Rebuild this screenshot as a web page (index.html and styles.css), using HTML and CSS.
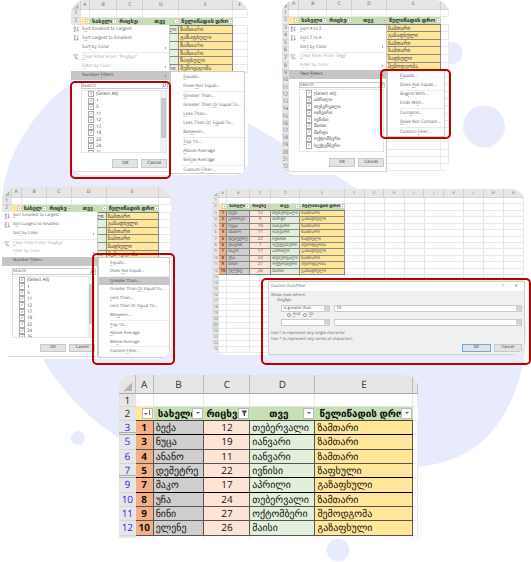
FILE: index.html
```html
<!DOCTYPE html>
<html lang="ka">
<head>
<meta charset="utf-8">
<title>Excel filters</title>
<link rel="stylesheet" href="styles.css">
</head>
<body>
<svg class="backdrop" viewBox="0 0 531 562" aria-hidden="true">
  <path d="M3.3 188C9 150 36 108 71.7 82.7C120 50 205 85 248 123C280 142 322 166 357 189C430 215 528 260 526 335Q526 348 524 359C518 390 507 415 489 435C470 455 445 464 418 467C370 478 180 470 118 437C90 420 62 392 43 359C5 300 -2 240 3.3 188Z"/>
  <circle cx="451.8" cy="53" r="11"/><circle cx="484" cy="126.5" r="21"/>
  <circle cx="78" cy="438" r="7"/><circle cx="338" cy="550" r="11.3"/>
</svg>
<svg class="defs" aria-hidden="true">
  <symbol id="az" viewBox="0 0 8 8"><path d="M1.2 3.4 2.4.6l1.2 2.8M1.5 2.5h1.8" stroke="#6a86b8"/><path d="M1.3 4.6h2.2L1.3 7.3h2.2" stroke="#9a6bb0"/><path d="M6.2.8v6M5 5.6l1.2 1.3 1.2-1.3" stroke="#777"/></symbol>
  <symbol id="za" viewBox="0 0 8 8"><path d="M1.2.7h2.3L1.2 3.4h2.3" stroke="#9a6bb0"/><path d="M1.2 7.3 2.4 4.6l1.2 2.7M1.5 6.5h1.8" stroke="#6a86b8"/><path d="M6.2.8v6M5 5.6l1.2 1.3 1.2-1.3" stroke="#777"/></symbol>
  <symbol id="clr" viewBox="0 0 8 8"><path d="M.6 1h5.6L4 3.6v3L2.9 5.8V3.6zM5 4.8l2.2 2.4M7.2 4.8 5 7.2" stroke="#999"/></symbol>
  <symbol id="mag" viewBox="0 0 8 8"><circle cx="4.8" cy="3" r="2.3" stroke="#4f7fb5"/><path d="M3.2 4.8.8 7.2" stroke="#4f7fb5"/></symbol>
</svg>

<main class="page">
<div class="row top">
  <section class="shot one">
    <div class="clip">
    <table class="sheet">
      <tr class="cols"><th class="corner"><th>A<th>B<th>C<th>D<th>E<th>F
      <tr><th>1<td><td><td><td><td><td>
      <tr class="head"><th>2<td><b></b><td><s>სახელი</s><b></b><td><s>რიცხვი</s><b class="on"></b><td class="mid"><s>თვე</s><b></b><td><s>წელიწადის დრო</s><b></b><td>
      <tr class="data"><th>3<td><td><td><td>თებერვალი<td>ზამთარი<td>
      <tr class="data"><th>4<td><td><td><td>მარტი<td>გაზაფხული<td>
      <tr class="data"><th>5<td><td><td><td>იანვარი<td>ზამთარი<td>
      <tr class="data"><th>6<td><td><td><td>იანვარი<td>ზამთარი<td>
      <tr class="data"><th>7<td><td><td><td>ივნისი<td>ზაფხული<td>
      <tr class="data"><th>8<td><td><td><td>სექტემბერი<td>შემოდგომა<td>
    </table>
    <div class="menu">
      <div class="item"><svg><use href="#az"/></svg>S<u>o</u>rt Smallest to Largest</div>
      <div class="item"><svg><use href="#za"/></svg>S<u>o</u>rt Largest to Smallest</div>
      <div class="item more">Sor<u>t</u> by Color</div><hr>
      <div class="item off"><svg><use href="#clr"/></svg><u>C</u>lear Filter From "რიცხვი"</div>
      <div class="item off more">F<u>i</u>lter by Color</div>
      <div class="item hot more">Number <u>F</u>ilters</div>
      <div class="search">Search<svg><use href="#mag"/></svg></div>
      <div class="list"><ul><li>(Select All)<li>1<li>5<li>11<li>12<li>17<li>19<li>22<li>24<li>26</ul><div class="bar"><i></i></div></div>
      <div class="buttons"><span>OK</span><span>Cancel</span></div>
    </div>
    <div class="sub">
      <div><u>E</u>quals...</div><div>Does <u>N</u>ot Equal...</div><hr>
      <div><u>G</u>reater Than...</div><div>Greater Than <u>O</u>r Equal To...</div><div><u>L</u>ess Than...</div><div>Less Than Or E<u>q</u>ual To...</div><div>Bet<u>w</u>een...</div><hr>
      <div><u>T</u>op 10...</div><div><u>A</u>bove Average</div><div>Bel<u>o</u>w Average</div><hr>
      <div>Custom <u>F</u>ilter...</div>
    </div>
    </div>
    <div class="mark"></div>
  </section>

  <section class="shot two">
    <div class="clip">
    <table class="sheet">
      <tr class="cols"><th class="corner"><th>A<th>B<th>C<th>D<th>E<th>
      <tr><th>1<td><td><td><td><td><td>
      <tr class="head"><th>2<td><b></b><td><s>სახელი</s><b></b><td><s>რიცხვი</s><b></b><td class="mid"><s>თვე</s><b class="on"></b><td><s>წელიწადის დრო</s><b></b><td>
      <tr class="data"><th>3<td><td><td><td><td>ზამთარი<td>
      <tr class="data"><th>4<td><td><td><td><td>გაზაფხული<td>
      <tr class="data"><th>5<td><td><td><td><td>ზამთარი<td>
      <tr class="data"><th>6<td><td><td><td><td>ზამთარი<td>
      <tr class="data"><th>7<td><td><td><td><td>ზაფხული<td>
      <tr class="data"><th>8<td><td><td><td><td>შემოდგომა<td>
      <tr><th class="cur">9<td><td><td><td><td><td>
      <tr><th>10<td><td><td><td><td><td>
      <tr><th>11<td><td><td><td><td><td>
      <tr><th>12<td><td><td><td><td><td>
      <tr><th>13<td><td><td><td><td><td>
      <tr><th>14<td><td><td><td><td><td>
      <tr><th>15<td><td><td><td><td><td>
      <tr><th>16<td><td><td><td><td><td>
      <tr><th>17<td><td><td><td><td><td>
      <tr><th>18<td><td><td><td><td><td>
      <tr><th>19<td><td><td><td><td><td>
      <tr><th>20<td><td><td><td><td><td>
      <tr><th>21<td><td><td><td><td><td>
      <tr><th>22<td><td><td><td><td><td>
    </table>
    <div class="menu">
      <div class="item"><svg><use href="#az"/></svg><u>S</u>ort A to Z</div>
      <div class="item"><svg><use href="#za"/></svg>S<u>o</u>rt Z to A</div>
      <div class="item more">Sor<u>t</u> by Color</div><hr>
      <div class="item off"><svg><use href="#clr"/></svg><u>C</u>lear Filter From "თვე"</div>
      <div class="item off more">F<u>i</u>lter by Color</div>
      <div class="item hot more">Text <u>F</u>ilters</div>
      <div class="search">Search<svg><use href="#mag"/></svg></div>
      <div class="list"><ul><li>(Select All)<li>აპრილი<li>თებერვალი<li>იანვარი<li>ივნისი<li>მაისი<li>მარტი<li>ოქტომბერი<li>სექტემბერი</ul></div>
      <div class="buttons"><span>OK</span><span>Cancel</span></div>
    </div>
    <div class="sub">
      <div><u>E</u>quals...</div><div>Does <u>N</u>ot Equal...</div><hr>
      <div>Beg<u>i</u>ns With...</div><div>Ends Wi<u>t</u>h...</div><hr>
      <div>Cont<u>a</u>ins...</div><div><u>D</u>oes Not Contain...</div><hr>
      <div>Custom <u>F</u>ilter...</div>
    </div>
    </div>
    <div class="mark"></div>
  </section>
</div>

<div class="row middle">
  <section class="shot three">
    <div class="clip">
    <table class="sheet">
      <tr class="cols"><th class="corner"><th>A<th>B<th>C<th>D<th>E<th>
      <tr><th>1<td><td><td><td><td><td>
      <tr class="head"><th>2<td><b></b><td><s>სახელი</s><b></b><td><s>რიცხვი</s><b class="on"></b><td class="mid"><s>თვე</s><b></b><td><s>წელიწადის დრო</s><b></b><td>
      <tr class="data"><th>3<td><td><td><td>თებერვალი<td>ზამთარი<td>
      <tr class="data"><th>4<td><td><td><td>მარტი<td>გაზაფხული<td>
      <tr class="data"><th>5<td><td><td><td>იანვარი<td>ზამთარი<td>
      <tr class="data"><th>6<td><td><td><td>იანვარი<td>ზამთარი<td>
      <tr class="data"><th>7<td><td><td><td>ივნისი<td>ზაფხული<td>
      <tr class="data"><th>8<td><td><td><td>სექტემბერი<td>შემოდგომა<td>
    </table>
    <div class="menu">
      <div class="item"><svg><use href="#az"/></svg><u>S</u>ort Smallest to Largest</div>
      <div class="item"><svg><use href="#za"/></svg>S<u>o</u>rt Largest to Smallest</div>
      <div class="item more">Sor<u>t</u> by Color</div><hr>
      <div class="item off"><svg><use href="#clr"/></svg><u>C</u>lear Filter From "რიცხვი"</div>
      <div class="item off more">F<u>i</u>lter by Color</div>
      <div class="item hot more">Number <u>F</u>ilters</div>
      <div class="search">Search<svg><use href="#mag"/></svg></div>
      <div class="list"><ul><li>(Select All)<li>1<li>5<li>11<li>12<li>17<li>19<li>22<li>24<li>26</ul><div class="bar"><i></i></div></div>
      <div class="buttons"><span>OK</span><span>Cancel</span></div>
    </div>
    <div class="sub">
      <div><u>E</u>quals...</div><div>Does <u>N</u>ot Equal...</div><hr>
      <div class="hot"><u>G</u>reater Than...</div><div>Greater Than <u>O</u>r Equal To...</div><div><u>L</u>ess Than...</div><div>Less Than Or E<u>q</u>ual To...</div><div>Bet<u>w</u>een...</div><hr>
      <div><u>T</u>op 10...</div><div><u>A</u>bove Average</div><div>Bel<u>o</u>w Average</div><hr>
      <div>Custom <u>F</u>ilter...</div>
    </div>
    </div>
    <div class="mark"></div>
  </section>

  <section class="shot four">
    <div class="clip">
    <table class="sheet">
      <tr class="cols"><th class="corner"><th>A<th>B<th>C<th>D<th>E<th>F<th>G<th>H<th>I<th>J<th>K<th>L<th>M<th>N
      <tr><th>1<td><td><td><td><td><td class="rest">
      <tr class="head"><th>2<td><b></b><td><s>სახელი</s><b></b><td><s>რიცხვი</s><b class="on"></b><td class="mid"><s>თვე</s><b></b><td><s>წელიწადის დრო</s><b></b><td class="rest">
      <tr class="data"><th>3<td>1<td>ბექა<td>12<td>თებერვალი<td>ზამთარი<td class="rest">
      <tr class="data"><th>4<td>2<td>გიორგი<td>5<td>მარტი<td>გაზაფხული<td class="rest">
      <tr class="data"><th>5<td>3<td>ნუცა<td>19<td>იანვარი<td>ზამთარი<td class="rest">
      <tr class="data"><th>6<td>4<td>ანანო<td>11<td>იანვარი<td>ზამთარი<td class="rest">
      <tr class="data"><th>7<td>5<td>დემეტრე<td>22<td>ივნისი<td>ზაფხული<td class="rest">
      <tr class="data"><th>8<td>6<td>დავით<td>1<td>სექტემბერი<td>შემოდგომა<td class="rest">
      <tr class="data"><th>9<td>7<td>მაკო<td>17<td>აპრილი<td>გაზაფხული<td class="rest">
      <tr class="data"><th>10<td>8<td>უჩა<td>24<td>თებერვალი<td>ზამთარი<td class="rest">
      <tr class="data"><th>11<td>9<td>ნინი<td>27<td>ოქტომბერი<td>შემოდგომა<td class="rest">
      <tr class="data"><th>12<td>10<td>ელენე<td>26<td>მაისი<td>გაზაფხული<td class="rest">
      <tr><th>13<td><td><td><td><td><td class="rest">
      <tr><th>14<td><td><td><td><td><td class="rest">
      <tr><th>15<td><td><td><td><td><td class="rest">
      <tr><th>16<td><td><td><td><td><td class="rest">
      <tr><th>17<td><td><td><td><td><td class="rest">
      <tr><th>18<td><td><td><td><td><td class="rest">
      <tr><th>19<td><td><td><td><td><td class="rest">
      <tr><th>20<td><td><td><td><td><td class="rest">
      <tr><th class="cur">21<td><td><td><td><td><td class="rest">
      <tr><th>22<td><td><td><td><td><td class="rest">
      <tr><th>23<td><td><td><td><td><td class="rest">
      <tr><th>24<td><td><td><td><td><td class="rest">
      <tr><th>25<td><td><td><td><td><td class="rest">
    </table>
    <div class="dialog">
      <header><span>Custom AutoFilter</span><span>?</span><span>✕</span></header>
      <div class="body">
        <p>Show rows where:</p>
        <p class="field">რიცხვი</p>
        <div class="pair"><span class="combo">is greater than</span><span class="combo">10</span></div>
        <div class="radios"><i class="sel"></i><span><u>A</u>nd</span><i></i><span><u>O</u>r</span></div>
        <div class="pair"><span class="combo"></span><span class="combo"></span></div>
        <div class="hint"><p>Use ? to represent any single character</p><p>Use * to represent any series of characters</p></div>
        <div class="buttons"><span class="ok">OK</span><span>Cancel</span></div>
      </div>
    </div>
    </div>
    <div class="mark"></div>
  </section>
</div>

<div class="row bottom">
  <section class="shot five">
    <div class="clip">
    <table class="sheet">
      <tr class="cols"><th class="corner"><th>A<th>B<th>C<th>D<th>E<th>
      <tr class="first"><th>1<td><td><td><td><td><td>
      <tr class="head"><th>2<td><b class="sort"></b><td><s>სახელი</s><b></b><td><s>რიცხვი</s><b class="funnel"></b><td class="mid"><s>თვე</s><b></b><td><s>წელიწადის დრო</s><b></b><td>
      <tr class="data gap"><th>3<td>1<td>ბექა<td>12<td>თებერვალი<td>ზამთარი<td>
      <tr class="data"><th>5<td>3<td>ნუცა<td>19<td>იანვარი<td>ზამთარი<td>
      <tr class="data"><th>6<td>4<td>ანანო<td>11<td>იანვარი<td>ზამთარი<td>
      <tr class="data gap"><th>7<td>5<td>დემეტრე<td>22<td>ივნისი<td>ზაფხული<td>
      <tr class="data heavy"><th>9<td>7<td>მაკო<td>17<td>აპრილი<td>გაზაფხული<td>
      <tr class="data"><th>10<td>8<td>უჩა<td>24<td>თებერვალი<td>ზამთარი<td>
      <tr class="data"><th>11<td>9<td>ნინი<td>27<td>ოქტომბერი<td>შემოდგომა<td>
      <tr class="data"><th>12<td>10<td>ელენე<td>26<td>მაისი<td>გაზაფხული<td>
      <tr><th><td><td><td><td><td><td>
    </table>
    </div>
  </section>
</div>
</main>
</body>
</html>
```
FILE: styles.css
```css
* { box-sizing: border-box; }
body {
  margin: 0;
  width: 531px;
  height: 562px;
  overflow: hidden;
  background: #fff;
  font-family: "Open Sans", "DejaVu Sans", sans-serif;
  color: #222;
  text-rendering: geometricPrecision;
}
.backdrop { position: absolute; inset: 0; width: 531px; height: 562px; fill: #e8ebfb; z-index: -1; }
.defs { position: absolute; width: 0; height: 0; }
symbol { overflow: visible; fill: none; }

/* Canvas rows */
.row { display: flex; align-items: flex-start; }
.top { height: 187px; padding-left: 71px; gap: 34px; }
.middle { height: 187px; padding-left: 2px; gap: 41px; }
.bottom { padding-left: 119px; }
.shot { position: relative; flex: none; }
.clip { position: relative; width: 100%; height: 100%; overflow: hidden; border-radius: 14px; background: #fff; }
.five .clip { border-radius: 12px 12px 0 0; }
.mark { position: absolute; border: 2px solid #c00000; border-radius: 5px; }

.one { width: 177px; height: 174.5px; --cols: 9.7px 9.3px 27.3px 26px 36px 53.4px 15.3px; --ch: 10.3px; --rh: 7.85px; --item: 9.05px; --li: 6.5px; --fs: 4.5px; --gs: 5.6px; }
.two { width: 167px; height: 174.5px; --cols: 6.7px 10.6px 28px 25px 34.7px 53.7px 8.3px; --ch: 9.5px; --rh: 7.6px; --item: 9px; --li: 6.5px; --fs: 4.45px; --gs: 5.4px; }
.three { width: 169px; height: 172px; --cols: 9.5px 10.2px 25.8px 24.2px 35px 52px 12.3px; --ch: 10.5px; --rh: 7.6px; --item: 8.85px; --li: 6.35px; --fs: 4.2px; --gs: 5.4px; }
.four { width: 313px; height: 166px; margin-top: 2px; --cols: 7.3px 8px 23px 21px 29px 44.4px repeat(9, 19.9px); --ch: 9.2px; --rh: 6.47px; --gs: 4.45px; }
.five { width: 299px; height: 163.5px; margin-top: .5px; --cols: 16.7px 18px 50.8px 45.8px 65.2px 98px 4.5px; --ch: 19.3px; --rh: 14.33px; --gs: 9.9px; }

/* Worksheet */
.sheet, .sheet tbody { display: block; }
.sheet tr { display: grid; grid-template-columns: var(--cols); height: var(--rh); line-height: calc(var(--rh) - .5px); font-size: var(--gs); }
.sheet th, .sheet td { display: block; min-width: 0; padding: 0; overflow: hidden; white-space: nowrap; text-align: left; }
.sheet td { border-right: 1px solid #e9e9e9; border-bottom: 1px solid #e9e9e9; }
.sheet th { background: #e6e6e6; color: #555; font-weight: 400; text-align: center; border-bottom: 1px solid #d6d6d6; }
.one th, .two th, .three th { font-size: 5px; }
.sheet .cols { height: var(--ch); line-height: var(--ch); }
.sheet .cols th { border-right: 1px solid #d0d0d0; }
.sheet .corner { background: linear-gradient(135deg, transparent 50%, #b5b5b5 50%) 70% 80% / 50% 50% no-repeat, #e6e6e6; }
.sheet .cur { background: #d5e2da; color: #217346; }
.sheet .head td { display: flex; align-items: center; background: #c6e0b4; border-right: 0; border-bottom: 1px solid #777; font-weight: 700; padding-left: 2px; color: #333; }
.sheet .head td:nth-child(2) { background: #ffe699; padding: 0; }
.sheet .head td:last-child { background: #fff; border-bottom-color: #e9e9e9; }
.sheet s { flex: 1; min-width: 0; overflow: hidden; text-decoration: none; }
.sheet .mid s { text-align: center; }
.sheet b { flex: none; width: 5px; height: 5px; margin-left: auto; background: linear-gradient(#888, #888) center / 40% 1px no-repeat, #fff; border: .5px solid #ccc; }
.sheet b.on { background-color: #ddd; }
.sheet .data td { border-color: #888; padding-left: 1px; }
.sheet .data td:nth-child(2) { background: #f4b084; text-align: center; font-weight: 700; padding: 0; }
.sheet .data td:nth-child(3) { background: #d0cece; }
.sheet .data td:nth-child(4) { background: #fce4d6; text-align: center; padding: 0; }
.sheet .data td:nth-child(5) { background: #e2efda; }
.sheet .data td:nth-child(6) { background: #ffe699; }
.sheet .data td:last-child { border-color: #e9e9e9; }
.sheet .rest { grid-column: 7 / 16; background: repeating-linear-gradient(90deg, transparent 0 18.9px, #e6e6e6 18.9px 19.9px) !important; }
.one .data td, .two .data td, .three .data td { color: #444; }

.one .data td:nth-child(5), .three .data td:nth-child(5) { direction: rtl; padding-right: 1px; }
.two tr:nth-child(n+10) { height: 7.22px; }
.four .data td { color: #555; }
.four th { font-size: 3.9px; color: #777; }
.four tr:nth-child(2) { height: 6px; }
.four tr:nth-child(n+14) { height: 5.95px; line-height: 5.5px; }

/* Filter menu */
.menu { position: absolute; background: #fff; font-size: var(--fs); color: #666; border-right: 1px solid #ccc; border-bottom: 1px solid #ddd; }
.one .menu { left: 0; top: 25px; width: 99.3px; height: 147px; --pad: 11px; }
.two .menu { left: 6.5px; top: 24.5px; width: 98.5px; height: 147px; --pad: 11.5px; }
.three .menu { left: 0; top: 25.2px; width: 96px; height: 145.3px; --pad: 11px; }
.menu hr, .sub hr { height: .9px; margin: 0 0 0 var(--pad); border: 0; background: #ececec; }
u { text-decoration-thickness: .4px; text-underline-offset: .5px; text-decoration-color: rgba(100, 100, 100, .35); }
.item { position: relative; height: var(--item); line-height: var(--item); padding-left: var(--pad); white-space: nowrap; }
.item svg { position: absolute; left: 1.5px; top: 1.3px; width: 6px; height: 6px; stroke-width: .8; }
.off { color: #aaa; }
.hot { background: #c6c6c6; color: #444; }
.more::after { content: ""; position: absolute; right: 3px; top: calc(50% - 1px); border: 1px solid transparent; border-left: 1.3px solid #555; border-right: 0; }
.search { display: flex; align-items: center; justify-content: space-between; height: 6.6px; margin: 2.2px 1.5px 0 calc(var(--pad) - 1px); border: 1px solid #ccc; line-height: 4px; }
.search svg { width: 6px; height: 5.5px; stroke-width: 1; }
.list { display: flex; justify-content: space-between; height: 63.5px; margin: .7px 2px 0 calc(var(--pad) - 1px); overflow: hidden; border: 1px solid #e6e6e6; color: #444; }
.three .list { height: 62px; }
.list ul { margin: 0; padding: .4px 0 0 6px; list-style: none; }
.list li { display: flex; align-items: center; gap: 1.5px; height: var(--li); white-space: nowrap; font-size: 4.7px; }
.list li::before { content: "✓"; width: 4.4px; height: 4.4px; border: .5px solid #aaa; font: 700 4px/3.2px "DejaVu Sans", sans-serif; text-align: center; }
.bar { width: 6px; background: #f0f0f0; }
.bar i { display: block; width: 5px; height: 40px; margin: 7px auto 0; background: #c8c8c8; }
.menu .buttons { display: flex; justify-content: flex-end; gap: 3px; margin: 6px 2px 0 0; }
.buttons span { width: 26px; height: 8.6px; border: 1px solid #c8c8c8; background: #e3e3e3; color: #333; text-align: center; line-height: 6.6px; }

.sub { position: absolute; padding-top: .6px; background: #fff; border: .5px solid #ccc; font-size: calc(var(--fs) + .1px); color: #666; --pad: 12px; }
.sub div { height: var(--sub); line-height: var(--sub); padding-left: var(--pad); white-space: nowrap; }
.one .sub { left: 99.3px; top: 71.3px; width: 75px; height: 103px; --sub: 9px; }
.two .sub { left: 105px; top: 70.2px; width: 58px; height: 66.5px; --sub: 8.9px; }
.three .sub { left: 96px; top: 70px; width: 72px; height: 101px; --sub: 8.6px; --pad: 11px; }

.one .mark { left: -1px; top: 81px; width: 101px; height: 98px; }
.two .mark { left: 97.5px; top: 69px; width: 71px; height: 70px; }
.three .mark { left: 90px; top: 66px; width: 83px; height: 112px; }
.four .mark { left: 49px; top: 89.3px; width: 269.5px; height: 87px; }

/* Custom AutoFilter dialog */
.dialog { position: absolute; left: 56px; top: 92px; width: 257px; height: 74px; border: 1px solid #c4d8c4; background: #f0f0f0; font-size: 4.1px; color: #666; line-height: 5.6px; }
.dialog header { display: flex; gap: 11px; height: 9px; padding: 0 6px 0 2px; background: #fff; line-height: 9px; }
.dialog header span:first-child { flex: 1; }
.dialog .body { padding: 1.8px 2px 0; }
.dialog p { margin: 0; }
.dialog .field { padding-left: 6px; }
.pair { display: flex; gap: 4px; margin: 1.2px 0 0 9.5px; }
.combo { width: 49px; height: 6.6px; padding-left: 2px; border: .5px solid #ccc; background: linear-gradient(#d4d4d4, #d4d4d4) right / 5px 100% no-repeat, #fff; color: #444; }
.combo + .combo { flex: 1; }
.radios { display: flex; align-items: center; gap: 1.5px; height: 6.2px; padding-left: 16px; }
.radios i { width: 4.2px; height: 4.2px; border: .5px solid #999; border-radius: 50%; background: #fff; }
.radios .sel { background: radial-gradient(#222 40%, #fff 50%); }
.radios span { width: 9px; }
.hint { margin-top: 5.6px; }
.dialog .buttons { display: flex; justify-content: flex-end; gap: 3px; margin: 1.2px 0 0; }
.dialog .buttons span { width: 28.5px; height: 8px; line-height: 6px; }
.dialog .buttons .ok { border-color: #6fa8dc; }

/* Filtered result */
.five th { font-size: 10px; color: #333; }
.five .cols th { border-right-color: #bbb; border-bottom-color: #aaa; }
.five .first { height: 13px; }
.five .data th { color: #2a2af0; }
.five .data td { border-color: #555; padding-left: 2px; color: #111; }
.five .data td:last-child { border-color: #e9e9e9; }
.five .gap td:not(:last-child), .five .heavy td:not(:last-child) { border-bottom-color: #000; }
.five .gap th { border-bottom: 3px double #aaa; }
.five .head td { border-bottom-color: #444; padding-left: 4px; color: #111; }
.five .head td:nth-child(4) { padding-left: 2px; }
.five b { position: relative; width: 11px; height: 11px; margin-right: 1px; border: 1px solid #bbb; background: #fff; }
.five b::after { content: ""; position: absolute; left: 2.5px; top: 3.5px; border: 2px solid transparent; border-top-color: #666; border-bottom: 0; }
.five b.funnel::after { left: 2px; top: 1.5px; width: 6px; height: 6px; border: 0; background: #444; clip-path: polygon(0 0, 100% 0, 62% 50%, 62% 100%, 38% 80%, 38% 50%); }
.five b.sort::after { left: 1px; top: 4px; }
.five b.sort::before { content: ""; position: absolute; left: 6.5px; top: 1px; width: 1px; height: 5px; background: #666; }
```
